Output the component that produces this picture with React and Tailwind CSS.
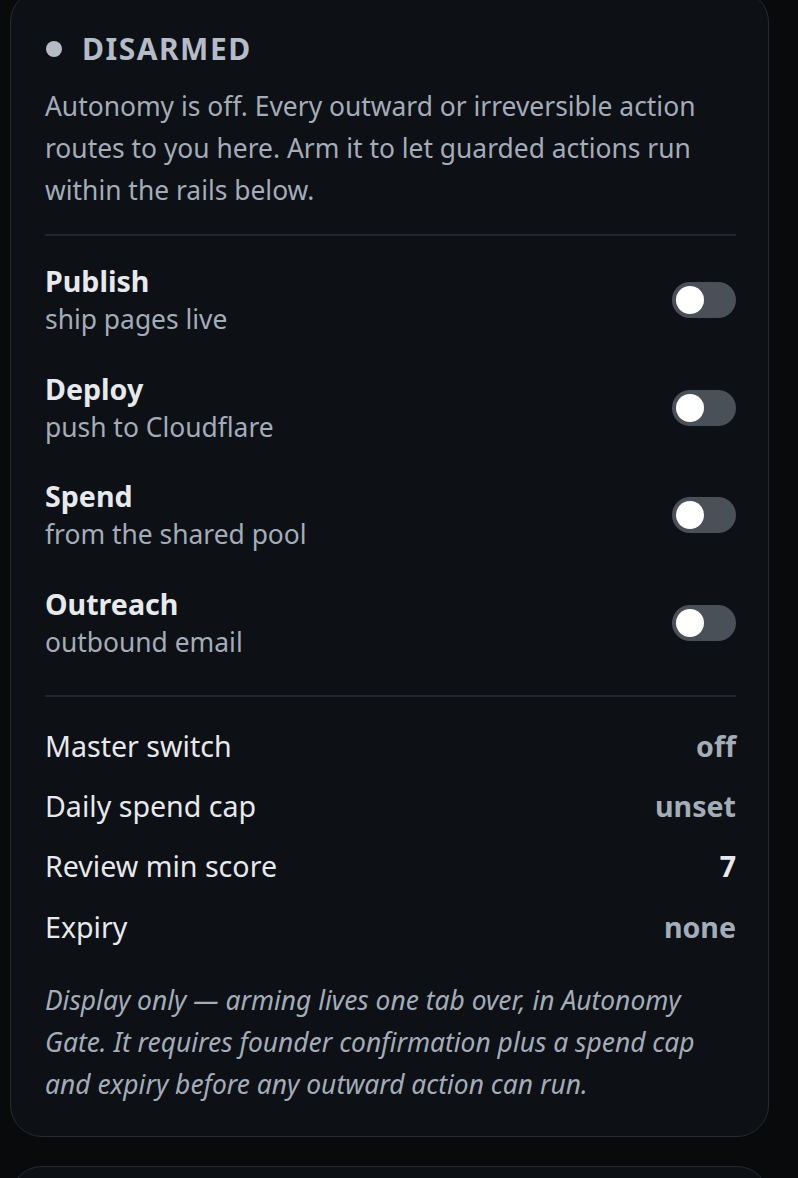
export default function App() {
  const gates = [
    { name: 'Publish', desc: 'ship pages live' },
    { name: 'Deploy', desc: 'push to Cloudflare' },
    { name: 'Spend', desc: 'from the shared pool' },
    { name: 'Outreach', desc: 'outbound email' },
  ];

  const rails = [
    { label: 'Master switch', value: 'off', bright: false },
    { label: 'Daily spend cap', value: 'unset', bright: false },
    { label: 'Review min score', value: '7', bright: true },
    { label: 'Expiry', value: 'none', bright: false },
  ];

  return (
    <div className="min-h-[1178px] w-full overflow-hidden bg-[#090a0c] font-['Noto_Sans','Open_Sans',sans-serif]">
      <div className="ml-[10px] mt-[-10px] w-[759px] rounded-[32px] border border-[#262a30] bg-[#0d1014] pb-[31px] pl-[34px] pr-[32px] pt-[38px]">
        {/* status header */}
        <div className="flex h-[40px] items-center gap-[20px]">
          <span className="ml-[1px] h-[16px] w-[16px] rounded-full bg-[#b4bcc8]" />
          <span className="text-[30px] font-bold leading-[40px] tracking-wider text-[#b4bcc8]">DISARMED</span>
        </div>
        <p className="mt-[16px] text-[26.4px] leading-[42px] text-[#a3adba]">
          Autonomy is off. Every outward or irreversible action routes to you here. Arm it to let guarded actions run
          within the rails below.
        </p>

        <div className="mt-[23px] border-t-2 border-[#22262c] pb-[18px] pt-[10px]">
          {gates.map((g) => (
            <div key={g.name} className="flex items-center justify-between py-[15.9px]">
              <div>
                <div className="text-[28.6px] font-bold leading-[38px] text-[#e6e9ee]">{g.name}</div>
                <div className="text-[26.4px] leading-[38px] text-[#a3adba]">{g.desc}</div>
              </div>
              <div className="flex h-[36px] w-[64px] items-center rounded-full bg-[#4a5058] pl-[4px]">
                <span className="h-[28px] w-[28px] rounded-full bg-white" />
              </div>
            </div>
          ))}
        </div>

        <div className="border-t-2 border-[#22262c] pt-[19px]">
          {rails.map((r) => (
            <div key={r.label} className="flex h-[60.3px] items-center justify-between">
              <span className="text-[28.6px] text-[#e6e9ee]">{r.label}</span>
              <span className={`text-[28.6px] font-bold ${r.bright ? 'text-[#e6e9ee]' : 'text-[#a3adba]'}`}>
                {r.value}
              </span>
            </div>
          ))}
        </div>

        <p className="mt-[22px] text-[26.4px] italic leading-[42px] text-[#a3adba]">
          Display only — arming lives one tab over, in Autonomy Gate. It requires founder confirmation plus a spend cap
          and expiry before any outward action can run.
        </p>
      </div>

      <div className="ml-[10px] mt-[29px] h-[120px] w-[759px] rounded-[32px] border border-[#262a30] bg-[#0d1014]" />
    </div>
  );
}
